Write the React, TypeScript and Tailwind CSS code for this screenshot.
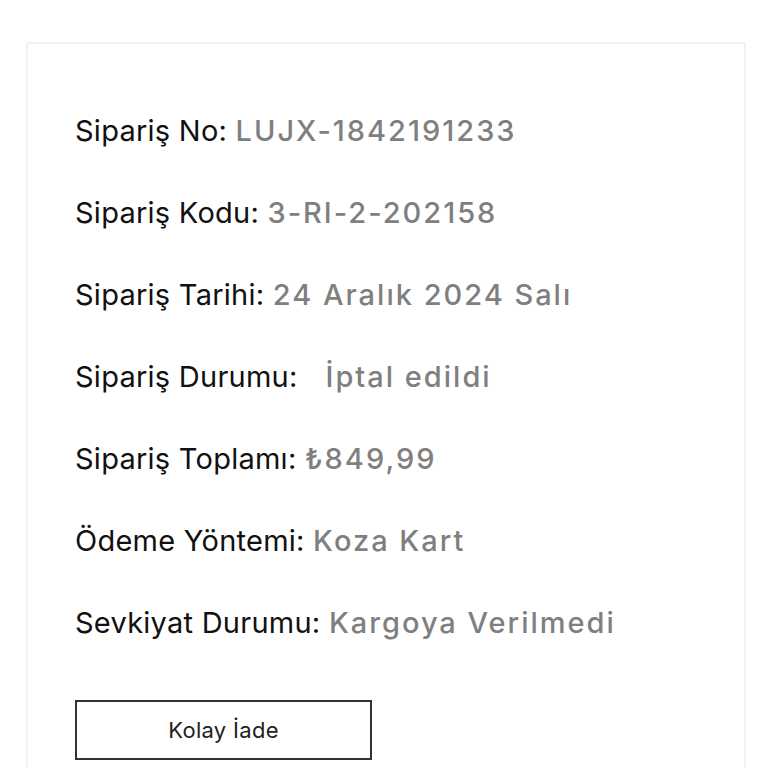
import React from "react";

const rows: [string, string][] = [
  ["Sipariş No:", "LUJX-1842191233"],
  ["Sipariş Kodu:", "3-RI-2-202158"],
  ["Sipariş Tarihi:", "24 Aralık 2024 Salı"],
  ["Sipariş Durumu:", "\u00a0 İptal edildi"],
  ["Sipariş Toplamı:", "₺849,99"],
  ["Ödeme Yöntemi:", "Koza Kart"],
  ["Sevkiyat Durumu:", "Kargoya Verilmedi"],
];

export default function App() {
  return (
    <div className="w-[768px] h-[768px] overflow-hidden bg-white" style={{ fontFamily: "Inter, 'Noto Sans', sans-serif" }}>
      <div className="ml-[26px] mt-[42px] w-[720px] h-[800px] border-2 border-[#f2f2f2] pl-[47px] pt-[45px]">
        <div className="flex flex-col">
          {rows.map(([l, v]) => (
            <div key={l} className="h-[82px] flex items-center text-[29px] leading-none whitespace-pre">
              <span className="text-[#111] tracking-[0.25px]">{l} </span>
              <span className="text-[#7f7f7f] font-medium tracking-[2px]">{v}</span>
            </div>
          ))}
        </div>
        <button className="mt-[37px] w-[297px] h-[60px] border-2 border-[#333] bg-white text-[22px] tracking-[0.3px] text-[#222] flex items-center justify-center">
          Kolay İade
        </button>
      </div>
    </div>
  );
}
